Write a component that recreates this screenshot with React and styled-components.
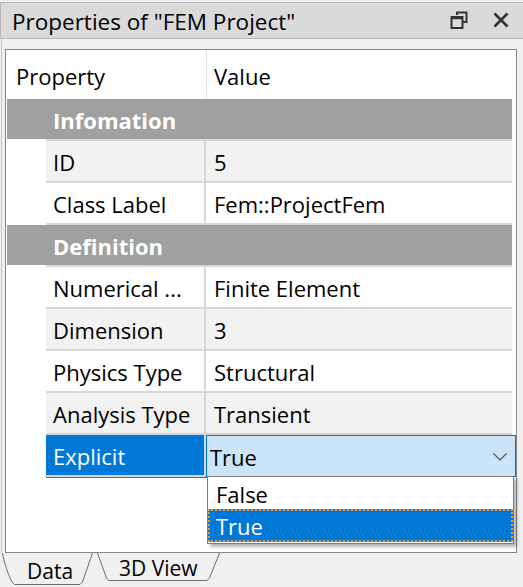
import React from "react";
import styled, { createGlobalStyle } from "styled-components";

const GlobalStyle = createGlobalStyle`
  html, body { margin: 0; padding: 0; background: #f0f0f0; }
  body { font-family: "Open Sans", "Noto Sans", sans-serif; }
  * { box-sizing: border-box; }
`;

const Window = styled.div`
  width: 523px;
  height: 587px;
  background: #f0f0f0;
  display: flex;
  flex-direction: column;
  overflow: hidden;
  font-size: 22px;
  color: #000;
`;

const TitleBar = styled.div`
  margin-top: 2px;
  height: 37px;
  background: #dadada;
  border-top: 1px solid #b9b9b9;
  border-bottom: 1px solid #b9b9b9;
  border-left: 1px solid #b9b9b9;
  display: flex;
  align-items: center;
  padding-left: 11px;
  padding-right: 14px;
`;

const Title = styled.div`
  flex: 1;
  font-size: 22.5px;
  line-height: 1;
  padding-top: 3px;
  white-space: nowrap;
`;

const TitleButtons = styled.div`
  display: flex;
  align-items: center;
  gap: 25px;
`;

const IconSvg = styled.svg`
  display: block;
`;

const Body = styled.div`
  margin-left: 1px;
  border-left: 1px solid #c6c6c6;
  padding: 10px 6px 0 3px;
`;

const Panel = styled.div`
  position: relative;
  height: 504px;
  border: 1px solid #828790;
  background: #fff;
  padding: 0 4px 0 1px;
`;

const HeaderRow = styled.div`
  height: 49px;
  display: flex;
  align-items: center;
`;

const HeadCell = styled.div`
  height: 100%;
  display: flex;
  align-items: center;
  width: ${(p) => (p.$w ? `${p.$w}px` : "auto")};
  flex: ${(p) => (p.$w ? "none" : 1)};
  padding-left: ${(p) => p.$pad}px;
  padding-top: 3px;
  border-left: ${(p) => (p.$divider ? "1px solid #e5e5e5" : "none")};
`;

const GroupRow = styled.div`
  height: 42px;
  display: flex;
  flex-direction: column;
`;

const GroupBar = styled.div`
  height: 40px;
  background: #a0a0a0;
  color: #fff;
  font-weight: 700;
  display: flex;
  align-items: center;
  padding-left: 46px;
  padding-top: 2px;
`;

const GroupLine = styled.div`
  height: 2px;
  margin-left: 39px;
  background: #d7d7d7;
`;

const DataRow = styled.div`
  height: 42px;
  display: flex;
`;

const Indent = styled.div`
  width: 39px;
  flex: none;
`;

const Cells = styled.div`
  flex: 1;
  display: flex;
  border-bottom: 2px solid #d7d7d7;
  box-shadow: ${(p) => (p.$selected ? "0 1px 0 #0078d7" : "none")};
  background: ${(p) => (p.$alt ? "#f2f2f2" : "#fff")};
`;

const PropCell = styled.div`
  width: 160px;
  flex: none;
  display: flex;
  align-items: center;
  padding-left: 7px;
  padding-top: 2px;
  border-right: 2px solid #d7d7d7;
  white-space: nowrap;
  overflow: hidden;
  background: ${(p) => (p.$selected ? "#0078d7" : "transparent")};
  color: ${(p) => (p.$selected ? "#fff" : "#000")};
`;

const ValueCell = styled.div`
  flex: 1;
  display: flex;
  align-items: center;
  padding-left: 8px;
  padding-top: 2px;
  white-space: nowrap;
`;

const EditorCell = styled.div`
  flex: 1;
  position: relative;
`;

const Combo = styled.div`
  position: absolute;
  left: 0;
  top: 0;
  right: -4px;
  height: 42px;
  background: #cce4f7;
  border: 1px solid #0078d7;
  display: flex;
  align-items: center;
  padding-left: 3px;
  padding-right: 8px;
  padding-top: 3px;
`;

const ComboText = styled.div`
  flex: 1;
`;

const Popup = styled.div`
  position: absolute;
  left: 201px;
  top: 426px;
  width: 307px;
  height: 68px;
  background: #fff;
  border: 1px solid #7a7a7a;
  box-shadow: 3px 3px 3px rgba(0, 0, 0, 0.28);
  display: flex;
  flex-direction: column;
`;

const Option = styled.div`
  height: ${(p) => p.$h}px;
  display: flex;
  align-items: center;
  padding-left: 6px;
  padding-top: 2px;
  background: ${(p) => (p.$selected ? "#0078d7" : "#fff")};
  color: ${(p) => (p.$selected ? "#fff" : "#000")};
  border: ${(p) => (p.$selected ? "2px dotted #f5912a" : "2px solid transparent")};
`;

const TabBar = styled.div`
  height: 35px;
  display: flex;
  position: relative;
`;

const Tab = styled.div`
  position: relative;
  width: ${(p) => p.$w}px;
  padding-left: ${(p) => p.$pad}px;
  padding-top: ${(p) => p.$top}px;
  font-size: 21px;
  line-height: 1;
  flex: none;
`;

const TabOutline = styled.svg`
  position: absolute;
  left: 0;
  top: 0;
  pointer-events: none;
`;

const TabLabel = styled.span`
  position: relative;
`;

const RestoreIcon = () => (
  <IconSvg width="18" height="18" viewBox="0 0 18 18">
    <path d="M7 4 V1.5 H16.5 V11 H13" fill="none" stroke="#333" strokeWidth="2" />
    <rect x="1.5" y="6" width="11" height="11" fill="none" stroke="#333" strokeWidth="2" />
    <path d="M1.5 7 H12.5" stroke="#333" strokeWidth="2.5" />
  </IconSvg>
);

const CloseIcon = () => (
  <IconSvg width="16" height="16" viewBox="0 0 16 16">
    <path d="M1.5 1.5 L14.5 14.5 M14.5 1.5 L1.5 14.5" stroke="#333" strokeWidth="2.6" />
  </IconSvg>
);

const Chevron = () => (
  <IconSvg width="14" height="8" viewBox="0 0 14 8">
    <path d="M0.5 0.5 L7 7 L13.5 0.5" fill="none" stroke="#555" strokeWidth="1.2" />
  </IconSvg>
);

const groups = [
  {
    name: "Infomation",
    rows: [
      { p: "ID", v: "5", alt: true },
      { p: "Class Label", v: "Fem::ProjectFem" },
    ],
  },
  {
    name: "Definition",
    rows: [
      { p: "Numerical ...", v: "Finite Element" },
      { p: "Dimension", v: "3", alt: true },
      { p: "Physics Type", v: "Structural" },
      { p: "Analysis Type", v: "Transient", alt: true },
      { p: "Explicit", v: "True", selected: true },
    ],
  },
];

export default function App() {
  return (
    <>
      <GlobalStyle />
      <Window>
        <TitleBar>
          <Title>Properties of "FEM Project"</Title>
          <TitleButtons>
            <RestoreIcon />
            <CloseIcon />
          </TitleButtons>
        </TitleBar>
        <Body>
          <Panel>
            <HeaderRow>
              <HeadCell $w={199} $pad={9}>Property</HeadCell>
              <HeadCell $pad={7} $divider>Value</HeadCell>
            </HeaderRow>
            {groups.map((g) => (
              <React.Fragment key={g.name}>
                <GroupRow>
                  <GroupBar>{g.name}</GroupBar>
                  <GroupLine />
                </GroupRow>
                {g.rows.map((r) => (
                  <DataRow key={r.p}>
                    <Indent />
                    <Cells $alt={r.alt} $selected={r.selected}>
                      <PropCell $selected={r.selected}>{r.p}</PropCell>
                      {r.selected ? (
                        <EditorCell>
                          <Combo>
                            <ComboText>{r.v}</ComboText>
                            <Chevron />
                          </Combo>
                        </EditorCell>
                      ) : (
                        <ValueCell>{r.v}</ValueCell>
                      )}
                    </Cells>
                  </DataRow>
                ))}
              </React.Fragment>
            ))}
            <Popup>
              <Option $h={32}>False</Option>
              <Option $h={33} $selected>True</Option>
            </Popup>
          </Panel>
        </Body>
        <TabBar>
          <Tab $w={95} $pad={27} $top={8}>
            <TabOutline width="95" height="35" viewBox="0 0 95 35">
              <path d="M2.5 0 C3.5 8, 9 24, 12 29 L14.5 31.5 H80 L82.5 29 L92.5 0" fill="none" stroke="#6d6d6d" strokeWidth="1" />
            </TabOutline>
            <TabLabel>Data</TabLabel>
          </Tab>
          <Tab $w={130} $pad={24} $top={5}>
            <TabOutline width="130" height="35" viewBox="0 0 130 35">
              <path d="M2.5 0 L11.5 25 L13.5 27.5 H112 L114.5 25 L124.5 0" fill="none" stroke="#6d6d6d" strokeWidth="1" />
            </TabOutline>
            <TabLabel>3D View</TabLabel>
          </Tab>
        </TabBar>
      </Window>
    </>
  );
}
